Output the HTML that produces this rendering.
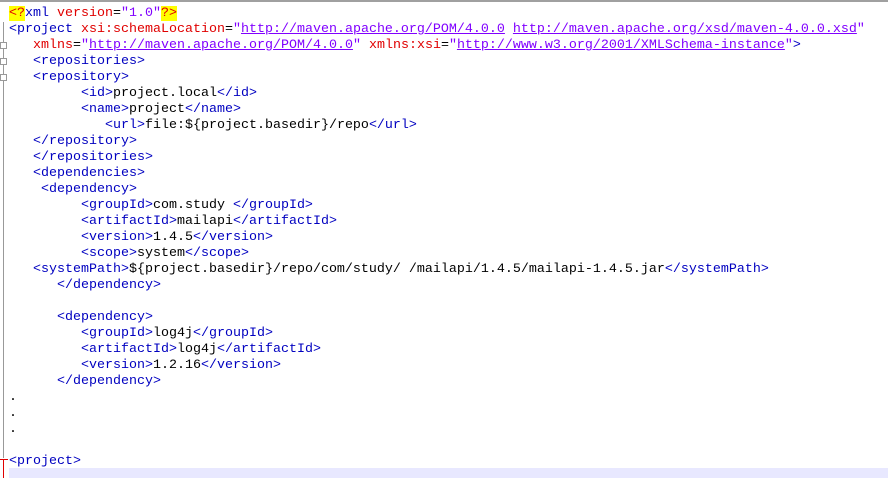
<!DOCTYPE html><html><head><style>
body{margin:0;width:888px;height:478px;background:#fff;overflow:hidden;position:relative;font-family:"Liberation Mono","Courier New",monospace;font-size:13.33px}
.top{position:absolute;left:0;top:0;width:888px;height:2px;background:#a0a0a0}
.gut{position:absolute;left:3px;top:22px;width:1px;height:436px;background:#999}
.cur{position:absolute;left:9px;top:468px;width:879px;height:10px;background:#e8e8ff}
pre{position:absolute;left:9px;top:6px;margin:0;font:inherit;line-height:16px;color:#000}
.t{color:#0000c0}.a{color:#e00000}.v{color:#8000ff}.u{color:#8000ff;text-decoration:underline}.y{background:#ffff00;color:#e00000}
.fb{position:absolute;left:0;width:7px;height:7px;border:1px solid #999;background:#fff;box-sizing:border-box}
</style></head><body>
<div class="top"></div><div class="gut"></div><div class="cur"></div>
<div class="fb" style="top:42px"></div><div class="fb" style="top:58px"></div><div class="fb" style="top:74px"></div>
<div style="position:absolute;left:0;top:459px;width:8px;height:1px;background:#e00000"></div>
<div style="position:absolute;left:3px;top:459px;width:1px;height:19px;background:#e00000"></div>
<pre><span class="y">&lt;?</span><span class="t">xml</span> <span class="a">version</span>=<span class="v">"1.0"</span><span class="y">?&gt;</span>
<span class="t">&lt;project</span> <span class="a">xsi:schemaLocation</span>=<span class="v">"</span><span class="u">http://maven.apache.org/POM/4.0.0</span> <span class="u">http://maven.apache.org/xsd/maven-4.0.0.xsd</span><span class="v">"</span>
   <span class="a">xmlns</span>=<span class="v">"</span><span class="u">http://maven.apache.org/POM/4.0.0</span><span class="v">"</span> <span class="a">xmlns:xsi</span>=<span class="v">"</span><span class="u">http://www.w3.org/2001/XMLSchema-instance</span><span class="v">"</span><span class="t">&gt;</span>
   <span class="t">&lt;repositories&gt;</span>
   <span class="t">&lt;repository&gt;</span>
         <span class="t">&lt;id&gt;</span>project.local<span class="t">&lt;/id&gt;</span>
         <span class="t">&lt;name&gt;</span>project<span class="t">&lt;/name&gt;</span>
            <span class="t">&lt;url&gt;</span>file:${project.basedir}/repo<span class="t">&lt;/url&gt;</span>
   <span class="t">&lt;/repository&gt;</span>
   <span class="t">&lt;/repositories&gt;</span>
   <span class="t">&lt;dependencies&gt;</span>
    <span class="t">&lt;dependency&gt;</span>
         <span class="t">&lt;groupId&gt;</span>com.study <span class="t">&lt;/groupId&gt;</span>
         <span class="t">&lt;artifactId&gt;</span>mailapi<span class="t">&lt;/artifactId&gt;</span>
         <span class="t">&lt;version&gt;</span>1.4.5<span class="t">&lt;/version&gt;</span>
         <span class="t">&lt;scope&gt;</span>system<span class="t">&lt;/scope&gt;</span>
   <span class="t">&lt;systemPath&gt;</span>${project.basedir}/repo/com/study/ /mailapi/1.4.5/mailapi-1.4.5.jar<span class="t">&lt;/systemPath&gt;</span>
      <span class="t">&lt;/dependency&gt;</span>

      <span class="t">&lt;dependency&gt;</span>
         <span class="t">&lt;groupId&gt;</span>log4j<span class="t">&lt;/groupId&gt;</span>
         <span class="t">&lt;artifactId&gt;</span>log4j<span class="t">&lt;/artifactId&gt;</span>
         <span class="t">&lt;version&gt;</span>1.2.16<span class="t">&lt;/version&gt;</span>
      <span class="t">&lt;/dependency&gt;</span>
.
.
.

<span class="t">&lt;project&gt;</span></pre>
</body></html>
